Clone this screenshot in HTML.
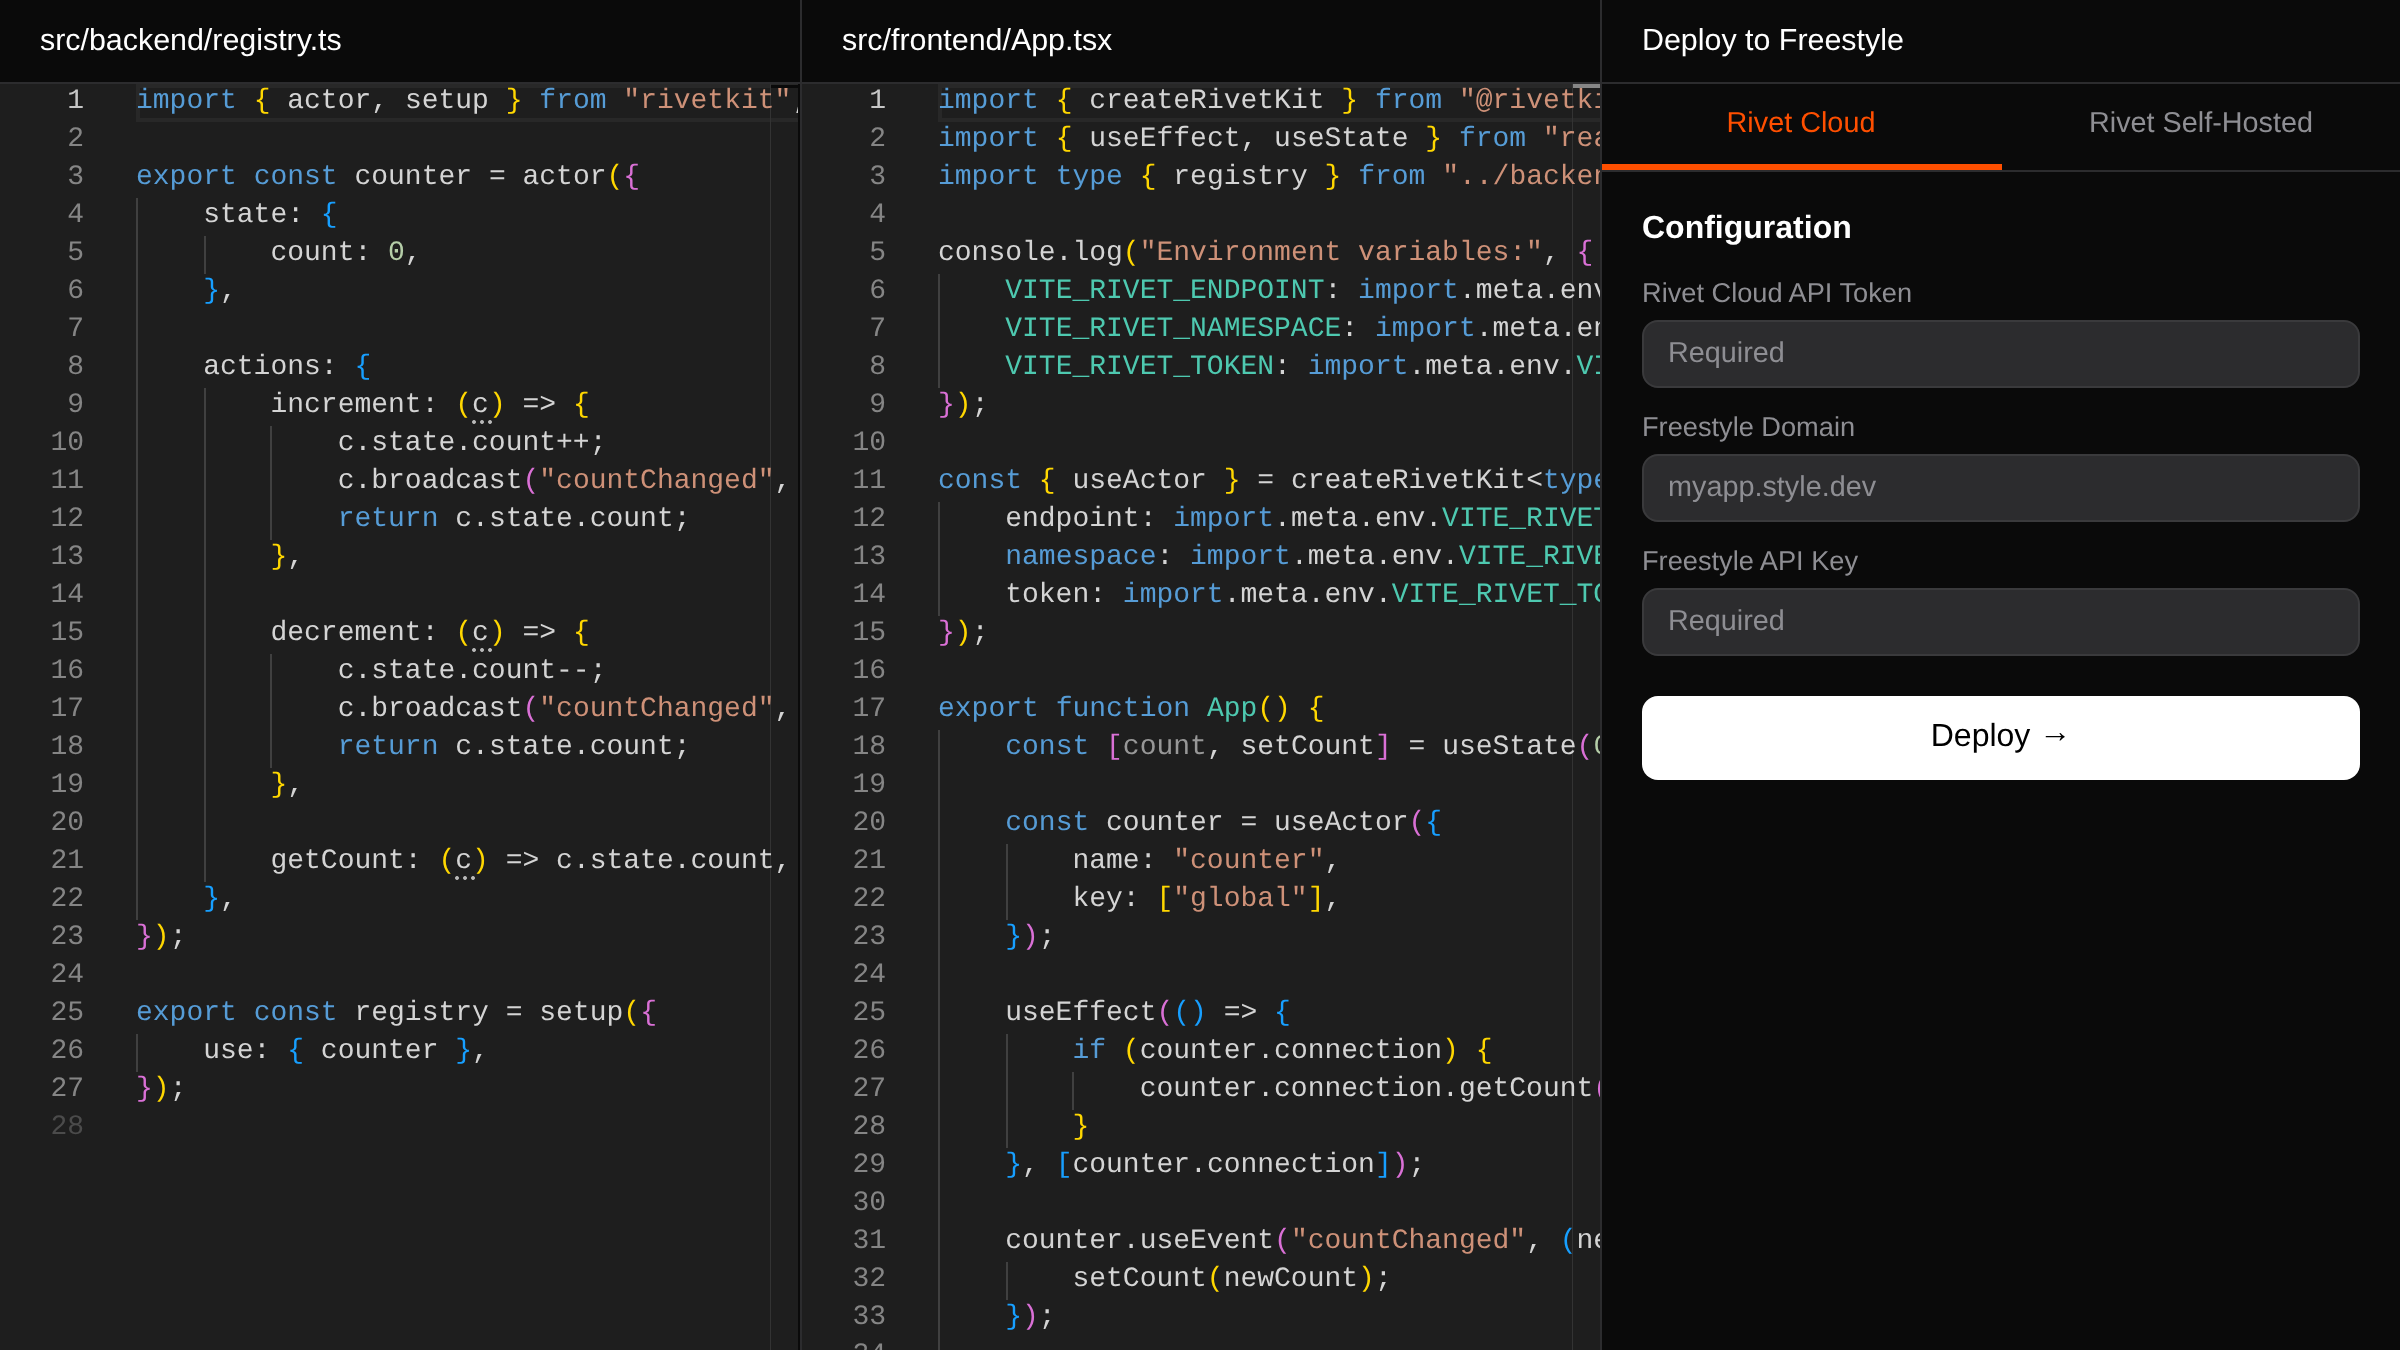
<!DOCTYPE html>
<html lang="en"><head><meta charset="utf-8"><title>Deploy to Freestyle</title>
<style>
*{box-sizing:border-box;margin:0;padding:0}
html,body{width:2400px;height:1350px;overflow:hidden;background:#0a0a0a}
body{text-rendering:geometricPrecision;font-family:"Liberation Sans",sans-serif;color:#fff;position:relative;-webkit-font-smoothing:antialiased}
#app{will-change:transform;position:absolute;left:0;top:0;width:2400px;height:1350px;overflow:hidden;background:#0a0a0a}
.col{position:absolute;top:0;height:1350px;overflow:hidden}
.c1{left:0;width:800px}
.c2{left:800px;width:800px;border-left:2px solid #2c2c2e}
.c3{left:1600px;width:800px;border-left:2px solid #2c2c2e}
.hd{position:absolute;left:0;top:0;right:0;height:84px;border-bottom:2px solid #2c2c2e;font-size:30.4px;line-height:34px;padding:23px 40px 0 40px;white-space:nowrap;color:#fff}
.c2 .hd,.c3 .hd{padding-left:40px}
.c1 .hd{padding-left:40px}
/* editor */
.ed{position:absolute;left:0;top:84px;width:798px;height:1266px;background:#1e1e1e;overflow:hidden;font-family:"Liberation Mono",monospace;font-size:28px;line-height:38px;color:#d4d4d4}
.nums{position:absolute;left:0;top:-1px;width:84px}
.ln{height:38px;text-align:right;color:#858585;white-space:pre}
.ln.a{color:#c6c6c6}
.ln.d{color:#4b4b4b}
.cur{position:absolute;left:136px;top:0;width:700px;height:38px;border:4px solid #282828}
.gl{position:absolute;left:0;top:0;width:798px;height:1400px}
.g{position:absolute;width:2px;background:#404040;display:block}
.h{position:absolute;display:block;width:20px;height:4px;margin-top:32px;background:radial-gradient(circle at 2px 2px,#b9b9b9 1.5px,rgba(185,185,185,0) 2.3px) 0 0/8px 4px repeat-x}
.code{position:absolute;left:136px;top:-1px;width:2000px}
.l{height:38px;white-space:pre}
.k{color:#569cd6}.s{color:#ce9178}.n{color:#b5cea8}.t{color:#4ec9b0}
.b1{color:#ffd700}.b2{color:#da70d6}.b3{color:#179fff}
.f{opacity:.667}
.ov{position:absolute;left:770px;top:0;width:1px;height:1266px;background:#333}
.ovc{position:absolute;left:771px;top:0;width:27px;height:4px}
.c1 .ovc{background:#0a0a0a;top:1px;height:3px}
.c2 .ovc{background:#868686}
/* right panel */
.tabs{position:absolute;left:0;top:84px;right:0;height:88px;border-bottom:2px solid #2c2c2e}
.tab{position:absolute;top:0;height:88px;width:400px;text-align:center;font-size:28.8px;line-height:34px;padding-top:22px;color:#8e8e93;white-space:nowrap}
.tab.on{left:0;width:398px;color:#ff4f00}
.tab.on:after{content:"";position:absolute;left:0;width:400px;bottom:2px;height:6px;background:#ff4f00}
.tab.off{left:400px;width:398px}
h3{position:absolute;left:40px;top:208px;font-size:32px;line-height:38px;font-weight:700;color:#fff;white-space:nowrap}
.lb{position:absolute;left:40px;font-size:27.2px;line-height:32px;color:#8e8e93;white-space:nowrap}
.in{position:absolute;left:40px;width:718px;height:68px;border:2px solid #3a3a3c;border-radius:16px;background:#2c2c2e;color:#8e8e93;font-size:28.8px;line-height:34px;padding:14px 0 0 24px;white-space:nowrap}
.btn{position:absolute;left:40px;top:696px;width:718px;height:84px;border-radius:16px;background:#fff;color:#000;font-size:32px;line-height:36px;padding-top:21px;text-align:center;white-space:nowrap}
.btn span{position:relative;top:-4px}

</style></head>
<body>
<div id="app">
<div class="col c1"><div class="hd">src/backend/registry.ts</div><div class="ed"><div class="nums"><div class="ln a">1</div><div class="ln">2</div><div class="ln">3</div><div class="ln">4</div><div class="ln">5</div><div class="ln">6</div><div class="ln">7</div><div class="ln">8</div><div class="ln">9</div><div class="ln">10</div><div class="ln">11</div><div class="ln">12</div><div class="ln">13</div><div class="ln">14</div><div class="ln">15</div><div class="ln">16</div><div class="ln">17</div><div class="ln">18</div><div class="ln">19</div><div class="ln">20</div><div class="ln">21</div><div class="ln">22</div><div class="ln">23</div><div class="ln">24</div><div class="ln">25</div><div class="ln">26</div><div class="ln">27</div><div class="ln d">28</div></div><div class="cur"></div><div class="ov"></div><div class="gl"><i class="g" style="left:136.0px;top:114px;height:722px"></i><i class="g" style="left:204.0px;top:152px;height:38px"></i><i class="g" style="left:204.0px;top:304px;height:494px"></i><i class="g" style="left:270.0px;top:342px;height:114px"></i><i class="g" style="left:270.0px;top:570px;height:114px"></i><i class="g" style="left:136.0px;top:950px;height:38px"></i><i class="h" style="left:472.1px;top:304px"></i><i class="h" style="left:472.1px;top:532px"></i><i class="h" style="left:455.3px;top:760px"></i></div><div class="code"><div class="l"><span class="k">import</span> <span class="b1">{</span> actor, setup <span class="b1">}</span> <span class="k">from</span> <span class="s">"rivetkit"</span>;</div><div class="l"></div><div class="l"><span class="k">export</span> <span class="k">const</span> counter = actor<span class="b1">(</span><span class="b2">{</span></div><div class="l">    state: <span class="b3">{</span></div><div class="l">        count: <span class="n">0</span>,</div><div class="l">    <span class="b3">}</span>,</div><div class="l"></div><div class="l">    actions: <span class="b3">{</span></div><div class="l">        increment: <span class="b1">(</span>c<span class="b1">)</span> =&gt; <span class="b1">{</span></div><div class="l">            c.state.count++;</div><div class="l">            c.broadcast<span class="b2">(</span><span class="s">"countChanged"</span>, c.state.count<span class="b2">)</span>;</div><div class="l">            <span class="k">return</span> c.state.count;</div><div class="l">        <span class="b1">}</span>,</div><div class="l"></div><div class="l">        decrement: <span class="b1">(</span>c<span class="b1">)</span> =&gt; <span class="b1">{</span></div><div class="l">            c.state.count--;</div><div class="l">            c.broadcast<span class="b2">(</span><span class="s">"countChanged"</span>, c.state.count<span class="b2">)</span>;</div><div class="l">            <span class="k">return</span> c.state.count;</div><div class="l">        <span class="b1">}</span>,</div><div class="l"></div><div class="l">        getCount: <span class="b1">(</span>c<span class="b1">)</span> =&gt; c.state.count,</div><div class="l">    <span class="b3">}</span>,</div><div class="l"><span class="b2">}</span><span class="b1">)</span>;</div><div class="l"></div><div class="l"><span class="k">export</span> <span class="k">const</span> registry = setup<span class="b1">(</span><span class="b2">{</span></div><div class="l">    use: <span class="b3">{</span> counter <span class="b3">}</span>,</div><div class="l"><span class="b2">}</span><span class="b1">)</span>;</div><div class="l"></div></div><div class="ovc"></div></div></div>
<div class="col c2"><div class="hd">src/frontend/App.tsx</div><div class="ed"><div class="nums"><div class="ln a">1</div><div class="ln">2</div><div class="ln">3</div><div class="ln">4</div><div class="ln">5</div><div class="ln">6</div><div class="ln">7</div><div class="ln">8</div><div class="ln">9</div><div class="ln">10</div><div class="ln">11</div><div class="ln">12</div><div class="ln">13</div><div class="ln">14</div><div class="ln">15</div><div class="ln">16</div><div class="ln">17</div><div class="ln">18</div><div class="ln">19</div><div class="ln">20</div><div class="ln">21</div><div class="ln">22</div><div class="ln">23</div><div class="ln">24</div><div class="ln">25</div><div class="ln">26</div><div class="ln">27</div><div class="ln">28</div><div class="ln">29</div><div class="ln">30</div><div class="ln">31</div><div class="ln">32</div><div class="ln">33</div><div class="ln">34</div><div class="ln">35</div></div><div class="cur"></div><div class="ov"></div><div class="gl"><i class="g" style="left:136.0px;top:190px;height:114px"></i><i class="g" style="left:136.0px;top:418px;height:114px"></i><i class="g" style="left:136.0px;top:646px;height:722px"></i><i class="g" style="left:204.0px;top:760px;height:76px"></i><i class="g" style="left:204.0px;top:950px;height:114px"></i><i class="g" style="left:270.0px;top:988px;height:38px"></i><i class="g" style="left:204.0px;top:1178px;height:38px"></i></div><div class="code"><div class="l"><span class="k">import</span> <span class="b1">{</span> createRivetKit <span class="b1">}</span> <span class="k">from</span> <span class="s">"@rivetkit/react"</span>;</div><div class="l"><span class="k">import</span> <span class="b1">{</span> useEffect, useState <span class="b1">}</span> <span class="k">from</span> <span class="s">"react"</span>;</div><div class="l"><span class="k">import</span> <span class="k">type</span> <span class="b1">{</span> registry <span class="b1">}</span> <span class="k">from</span> <span class="s">"../backend/registry"</span>;</div><div class="l"></div><div class="l">console.log<span class="b1">(</span><span class="s">"Environment variables:"</span>, <span class="b2">{</span></div><div class="l">    <span class="t">VITE_RIVET_ENDPOINT</span>: <span class="k">import</span>.meta.env.<span class="t">VITE_RIVET_ENDPOINT</span>,</div><div class="l">    <span class="t">VITE_RIVET_NAMESPACE</span>: <span class="k">import</span>.meta.env.<span class="t">VITE_RIVET_NAMESPACE</span>,</div><div class="l">    <span class="t">VITE_RIVET_TOKEN</span>: <span class="k">import</span>.meta.env.<span class="t">VITE_RIVET_TOKEN</span>,</div><div class="l"><span class="b2">}</span><span class="b1">)</span>;</div><div class="l"></div><div class="l"><span class="k">const</span> <span class="b1">{</span> useActor <span class="b1">}</span> = createRivetKit&lt;<span class="k">typeof</span> registry&gt;<span class="b1">(</span><span class="b2">{</span></div><div class="l">    endpoint: <span class="k">import</span>.meta.env.<span class="t">VITE_RIVET_ENDPOINT</span>,</div><div class="l">    <span class="k">namespace</span>: <span class="k">import</span>.meta.env.<span class="t">VITE_RIVET_NAMESPACE</span>,</div><div class="l">    token: <span class="k">import</span>.meta.env.<span class="t">VITE_RIVET_TOKEN</span>,</div><div class="l"><span class="b2">}</span><span class="b1">)</span>;</div><div class="l"></div><div class="l"><span class="k">export</span> <span class="k">function</span> <span class="t">App</span><span class="b1">(</span><span class="b1">)</span> <span class="b1">{</span></div><div class="l">    <span class="k">const</span> <span class="b2">[</span><span class="f">count</span>, setCount<span class="b2">]</span> = useState<span class="b2">(</span><span class="n">0</span><span class="b2">)</span>;</div><div class="l"></div><div class="l">    <span class="k">const</span> counter = useActor<span class="b2">(</span><span class="b3">{</span></div><div class="l">        name: <span class="s">"counter"</span>,</div><div class="l">        key: <span class="b1">[</span><span class="s">"global"</span><span class="b1">]</span>,</div><div class="l">    <span class="b3">}</span><span class="b2">)</span>;</div><div class="l"></div><div class="l">    useEffect<span class="b2">(</span><span class="b3">(</span><span class="b3">)</span> =&gt; <span class="b3">{</span></div><div class="l">        <span class="k">if</span> <span class="b1">(</span>counter.connection<span class="b1">)</span> <span class="b1">{</span></div><div class="l">            counter.connection.getCount<span class="b2">(</span><span class="b2">)</span>.then<span class="b2">(</span>setCount<span class="b2">)</span>;</div><div class="l">        <span class="b1">}</span></div><div class="l">    <span class="b3">}</span>, <span class="b3">[</span>counter.connection<span class="b3">]</span><span class="b2">)</span>;</div><div class="l"></div><div class="l">    counter.useEvent<span class="b2">(</span><span class="s">"countChanged"</span>, <span class="b3">(</span>newCount: <span class="k">number</span><span class="b3">)</span> =&gt; <span class="b3">{</span></div><div class="l">        setCount<span class="b1">(</span>newCount<span class="b1">)</span>;</div><div class="l">    <span class="b3">}</span><span class="b2">)</span>;</div><div class="l"></div><div class="l"></div></div><div class="ovc"></div></div></div>
<div class="col c3"><div class="hd">Deploy to Freestyle</div>
<div class="tabs"><div class="tab on">Rivet Cloud</div><div class="tab off">Rivet Self-Hosted</div></div>
<h3>Configuration</h3>
<div class="lb" style="top:277px">Rivet Cloud API Token</div><div class="in" style="top:320px">Required</div>
<div class="lb" style="top:411px">Freestyle Domain</div><div class="in" style="top:454px">myapp.style.dev</div>
<div class="lb" style="top:545px">Freestyle API Key</div><div class="in" style="top:588px">Required</div>
<div class="btn">Deploy <span>→</span></div>
</div>
</div>
<script>(function(){var w=window.innerWidth;if(w&&Math.abs(w-2400)>1){document.documentElement.style.zoom=w/2400}})();</script>
</body></html>
